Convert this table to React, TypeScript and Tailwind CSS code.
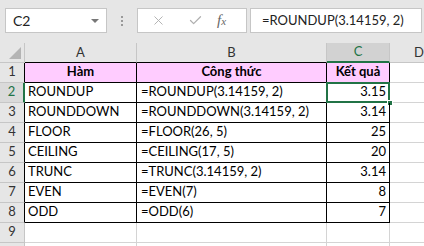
import { Check, X } from 'lucide-react';

type Row = { fn: string; formula: string; value: string };

const rows: Row[] = [
  { fn: 'ROUNDUP', formula: '=ROUNDUP(3.14159, 2)', value: '3.15' },
  { fn: 'ROUNDDOWN', formula: '=ROUNDDOWN(3.14159, 2)', value: '3.14' },
  { fn: 'FLOOR', formula: '=FLOOR(26, 5)', value: '25' },
  { fn: 'CEILING', formula: '=CEILING(17, 5)', value: '20' },
  { fn: 'TRUNC', formula: '=TRUNC(3.14159, 2)', value: '3.14' },
  { fn: 'EVEN', formula: '=EVEN(7)', value: '8' },
  { fn: 'ODD', formula: '=ODD(6)', value: '7' },
];

const font = { fontFamily: 'Lato, "Liberation Sans", sans-serif' };

const FormulaBar = () => (
  <div className="flex h-[43px] items-start bg-[#e6e6e6] pt-[8px] pl-[5px]">
    <div className="flex h-[25px] w-[102px] items-center justify-between border border-[#c6c6c6] bg-white pl-[7px] pr-[7px] text-[14px] text-[#222]">
      <span>C2</span>
      <span className="h-0 w-0 border-x-[4px] border-t-[4px] border-x-transparent border-t-[#777]" />
    </div>
    <div className="flex h-[25px] w-[30px] flex-col items-center justify-center gap-[2px]">
      <span className="h-[2px] w-[2px] bg-[#999]" />
      <span className="h-[2px] w-[2px] bg-[#999]" />
      <span className="h-[2px] w-[2px] bg-[#999]" />
    </div>
    <div className="flex h-[25px] w-[110px] items-center border border-[#c6c6c6] bg-white pl-[13px]">
      <X size={15} strokeWidth={1.5} className="text-[#b0b0b0]" />
      <Check size={15} strokeWidth={2} className="ml-[22px] text-[#b0b0b0]" />
      <span
        className="ml-[14px] text-[15px] italic text-[#666]"
        style={{ fontFamily: '"Liberation Serif", serif' }}
      >
        f<span className="text-[11px]">x</span>
      </span>
    </div>
    <div className="mr-[2px] ml-[3px] flex h-[25px] flex-1 items-center whitespace-nowrap border border-[#c6c6c6] bg-white pl-[11px] text-[13px] text-[#222]">
      =ROUNDUP(3.14159, 2)
    </div>
  </div>
);

export default function App() {
  return (
    <div className="h-[246px] w-[424px] overflow-hidden bg-white text-[13px] text-black" style={font}>
      <FormulaBar />
      <div className="grid grid-cols-[25px_112px_190px_63px_1fr] grid-rows-[20px_repeat(10,20px)] whitespace-nowrap">
        {/* column headers */}
        <div className="relative border-r border-b border-[#c6c6c6] bg-[#e6e6e6]">
          <span className="absolute right-[3px] bottom-[3px] h-0 w-0 border-b-[12px] border-l-[12px] border-b-[#b4b4b4] border-l-transparent" />
        </div>
        <div className="flex items-center justify-center border-r border-b border-r-[#c6c6c6] border-b-black bg-[#e6e6e6] text-[#333]">A</div>
        <div className="flex items-center justify-center border-r border-b border-r-[#c6c6c6] border-b-black bg-[#e6e6e6] text-[#333]">B</div>
        <div className="flex items-center justify-center border-r border-b-2 border-r-[#c6c6c6] border-b-[#217346] bg-[#d2d2d2] text-[#217346]">C</div>
        <div className="flex items-center border-b border-[#c6c6c6] bg-[#e6e6e6] pl-[24px] text-[#333]">D</div>

        {/* header row */}
        <div className="flex items-end justify-center border-r border-b border-r-black border-b-[#c6c6c6] bg-[#e6e6e6] pb-[1px] text-[#333]">1</div>
        <div className="flex items-end justify-center border-r border-b border-black bg-[#ffccff] pb-[1px] font-bold">Hàm</div>
        <div className="flex items-end justify-center border-r border-b border-black bg-[#ffccff] pb-[1px] font-bold">Công thức</div>
        <div className="flex items-end justify-center border-r border-b border-black bg-[#ffccff] pb-[1px] font-bold">Kết quả</div>
        <div className="border-b border-[#d4d4d4]" />

        {rows.map((r, i) => {
          const n = i + 2;
          const active = n === 2;
          return [
            <div
              key={`h${n}`}
              className={
                active
                  ? 'flex items-end justify-center border-r-2 border-b border-r-[#217346] border-b-[#c6c6c6] bg-[#dadada] pb-[1px] text-[#217346]'
                  : 'flex items-end justify-center border-r border-b border-r-black border-b-[#c6c6c6] bg-[#e6e6e6] pb-[1px] text-[#333]'
              }
            >
              {n}
            </div>,
            <div key={`a${n}`} className="flex items-end border-r border-b border-black pl-[3px] pb-[1px]">
              {r.fn}
            </div>,
            <div key={`b${n}`} className="flex items-end border-r border-b border-black pl-[4px] pb-[1px]">
              {r.formula}
            </div>,
            <div key={`c${n}`} className="relative flex items-end justify-end border-r border-b border-black pr-[3px] pb-[1px]">
              {r.value}
              {active && (
                <>
                  <span className="pointer-events-none absolute -top-[1px] -right-[1px] -bottom-[1px] -left-[1px] border-2 border-[#217346]" />
                  <span className="absolute -right-[4px] -bottom-[4px] h-[6px] w-[6px] border border-white bg-[#217346]" />
                </>
              )}
            </div>,
            <div key={`d${n}`} className="border-b border-[#d4d4d4]" />,
          ];
        })}

        {/* empty rows */}
        {[9, 10].map((n) => [
          <div key={`h${n}`} className="flex items-end justify-center border-r border-b border-[#c6c6c6] bg-[#e6e6e6] pb-[1px] text-[#333]">
            {n === 9 ? n : null}
          </div>,
          <div key={`a${n}`} className="border-r border-b border-[#d4d4d4]" />,
          <div key={`b${n}`} className="border-r border-b border-[#d4d4d4]" />,
          <div key={`c${n}`} className="border-r border-b border-[#d4d4d4]" />,
          <div key={`d${n}`} className="border-b border-[#d4d4d4]" />,
        ])}
      </div>
    </div>
  );
}
